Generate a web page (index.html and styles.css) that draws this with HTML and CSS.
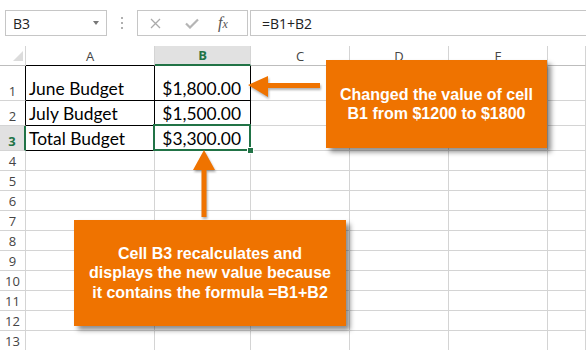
FILE: index.html
```html
<!DOCTYPE html>
<html lang="en">
<head>
    <meta charset="UTF-8">
    <meta name="viewport" content="width=device-width, initial-scale=1.0">
    <title>Cell References</title>
    <link rel="stylesheet" href="styles.css">
</head>
<body>
    <div class="toolbar">
        <div class="namebox"><span>B3</span><span class="caret"></span></div>
        <div class="grip"><i></i><i></i><i></i></div>
        <div class="fxbox">
            <svg class="ico-x" width="11" height="11" viewBox="0 0 11 11"><path d="M1 1L10 10M10 1L1 10" stroke="#aaa" stroke-width="1.3" fill="none"/></svg>
            <svg class="ico-ok" width="14" height="11" viewBox="0 0 14 11"><path d="M1 5.5L5 9.5L13 1.5" stroke="#b5b5b5" stroke-width="2.2" fill="none"/></svg>
            <span class="fx">f<small>x</small></span>
        </div>
        <div class="formula">=B1+B2</div>
    </div>

    <div class="sheet">
        <div class="row head">
            <div class="corner"><span class="tri"></span></div>
            <div class="ch bk">A</div>
            <div class="ch sel">B</div>
            <div class="ch">C</div>
            <div class="ch">D</div>
            <div class="ch">E</div>
            <div class="ch"></div>
        </div>
        <div class="row tall">
            <div class="rh bk">1</div>
            <div class="c bx">June Budget</div>
            <div class="c bx num">$1,800.00</div>
            <div class="c"></div><div class="c"></div><div class="c"></div><div class="c"></div>
        </div>
        <div class="row mid">
            <div class="rh bk">2</div>
            <div class="c bx">July Budget</div>
            <div class="c bx num">$1,500.00</div>
            <div class="c"></div><div class="c"></div><div class="c"></div><div class="c"></div>
        </div>
        <div class="row mid">
            <div class="rh sel">3</div>
            <div class="c bx">Total Budget</div>
            <div class="c num cur">$3,300.00</div>
            <div class="c"></div><div class="c"></div><div class="c"></div><div class="c"></div>
        </div>
        <div class="row"><div class="rh">4</div><div class="c"></div><div class="c"></div><div class="c"></div><div class="c"></div><div class="c"></div><div class="c"></div></div>
        <div class="row"><div class="rh">5</div><div class="c"></div><div class="c"></div><div class="c"></div><div class="c"></div><div class="c"></div><div class="c"></div></div>
        <div class="row"><div class="rh">6</div><div class="c"></div><div class="c"></div><div class="c"></div><div class="c"></div><div class="c"></div><div class="c"></div></div>
        <div class="row"><div class="rh">7</div><div class="c"></div><div class="c"></div><div class="c"></div><div class="c"></div><div class="c"></div><div class="c"></div></div>
        <div class="row"><div class="rh">8</div><div class="c"></div><div class="c"></div><div class="c"></div><div class="c"></div><div class="c"></div><div class="c"></div></div>
        <div class="row"><div class="rh">9</div><div class="c"></div><div class="c"></div><div class="c"></div><div class="c"></div><div class="c"></div><div class="c"></div></div>
        <div class="row"><div class="rh">10</div><div class="c"></div><div class="c"></div><div class="c"></div><div class="c"></div><div class="c"></div><div class="c"></div></div>
        <div class="row"><div class="rh">11</div><div class="c"></div><div class="c"></div><div class="c"></div><div class="c"></div><div class="c"></div><div class="c"></div></div>
        <div class="row"><div class="rh">12</div><div class="c"></div><div class="c"></div><div class="c"></div><div class="c"></div><div class="c"></div><div class="c"></div></div>
        <div class="row"><div class="rh">13</div><div class="c"></div><div class="c"></div><div class="c"></div><div class="c"></div><div class="c"></div><div class="c"></div></div>
    </div>

    <!-- callouts over the sheet -->
    <svg class="arrow a1" width="80" height="28" viewBox="0 0 80 28">
        <path d="M2 13L22 4L22 11L74 11L74 16L22 16L22 25Z" fill="#ef7300"/>
    </svg>
    <div class="callout c1">Changed the value of cell<br>B1 from $1200 to $1800</div>

    <svg class="arrow a2" width="28" height="74" viewBox="0 0 28 74">
        <path d="M14 2L25 22L16.5 22L16.5 69L11.5 69L11.5 22L3 22Z" fill="#ef7300"/>
    </svg>
    <div class="callout c2">Cell B3 recalculates and<br>displays the new value because<br>it contains the formula =B1+B2</div>
</body>
</html>
```

FILE: styles.css
```css
body {
    margin: 0;
    width: 586px;
    height: 350px;
    overflow: hidden;
    position: relative;
    background-color: white;
    font-family: "Open Sans", "Liberation Sans", sans-serif;
}

/* formula bar */

.toolbar {
    display: flex;
    height: 26px;
    margin: 10px 0;
}

.namebox {
    margin-left: 5px;
    width: 102px;
    box-sizing: border-box;
    border: 1px solid #c6c6c6;
    padding: 0 7px;
    display: flex;
    align-items: center;
    justify-content: space-between;
    font-size: 14px;
    color: #222;
}

.caret {
    border-left: 3px solid transparent;
    border-right: 3px solid transparent;
    border-top: 4px solid #777;
}

.grip {
    width: 30px;
    display: flex;
    flex-direction: column;
    align-items: center;
    justify-content: center;
    gap: 3px;
}

.grip i {
    width: 2px;
    height: 2px;
    background-color: #b0b0b0;
}

.fxbox {
    width: 111px;
    box-sizing: border-box;
    border: 1px solid #c6c6c6;
    padding-left: 12px;
    display: flex;
    align-items: center;
}

.ico-ok {
    margin-left: 24px;
}

.fx {
    margin-left: 19px;
    font-family: "Liberation Serif", serif;
    font-style: italic;
    font-size: 16px;
    color: #555;
}

.fx small {
    font-size: 12px;
}

.formula {
    flex: 1;
    margin-left: 2px;
    border: 1px solid #c6c6c6;
    border-right: none;
    padding-left: 11px;
    display: flex;
    align-items: center;
    font-size: 14px;
    color: #222;
}

/* grid */

.row {
    display: grid;
    grid-template-columns: 26px 129px 96px 99px 99px 99px 1fr;
    height: 20px;
}

.row.head {
    height: 20px;
}

.row.tall {
    height: 35px;
}

.row.mid {
    height: 25px;
}

.row > div {
    box-sizing: border-box;
    border-right: 1px solid #d4d4d4;
    border-bottom: 1px solid #d4d4d4;
}

.head > div {
    display: flex;
    align-items: center;
    justify-content: center;
    font-size: 13px;
    line-height: 16px;
    color: #444;
    border-bottom-color: #bdbdbd;
}

.head .corner {
    justify-content: flex-end;
    align-items: flex-end;
    padding: 0 2px 4px 0;
}

.tri {
    width: 0;
    height: 0;
    border-left: 10px solid transparent;
    border-bottom: 10px solid #dcdcdc;
}

.head .ch.bk {
    border-bottom-color: #000;
}

.head .ch.sel {
    background-color: #e1e1e1;
    color: #217346;
    font-weight: bold;
    border-bottom: 2px solid #217346;
}

.rh {
    display: flex;
    align-items: flex-end;
    justify-content: center;
    padding-bottom: 1px;
    font-size: 13px;
    line-height: 16px;
    color: #444;
}

.rh.bk {
    border-right-color: #000;
}

.rh.sel {
    background-color: #e1e1e1;
    color: #217346;
    font-weight: bold;
    border-right: 2px solid #217346;
}

.c {
    display: flex;
    align-items: flex-end;
    padding: 0 0 1px 3px;
    font-family: Lato, "Liberation Sans", sans-serif;
    font-size: 17.4px;
    line-height: 20px;
    color: #000;
    white-space: nowrap;
}

.c.bx {
    border-right-color: #000;
    border-bottom-color: #000;
}

.c.num {
    justify-content: flex-end;
    padding-right: 9px;
}

.c.cur {
    position: relative;
}

.c.cur::after {
    content: "";
    position: absolute;
    top: -2px;
    left: -2px;
    right: -1px;
    bottom: -1px;
    border: 2px solid #217346;
}

.c.cur::before {
    content: "";
    position: absolute;
    right: -4px;
    bottom: -4px;
    width: 5px;
    height: 5px;
    background-color: #217346;
    border: 1px solid white;
    z-index: 2;
}

/* callouts */

.callout {
    position: absolute;
    display: flex;
    align-items: center;
    justify-content: center;
    text-align: center;
    background-color: #ef7300;
    color: white;
    font-family: "Liberation Sans", Arial, sans-serif;
    font-weight: bold;
    font-size: 16px;
    line-height: 19px;
    box-shadow: 4px 4px 5px rgba(0, 0, 0, 0.45);
}

.c1 {
    left: 326px;
    top: 60px;
    width: 221px;
    height: 88px;
}

.c2 {
    left: 74px;
    top: 220px;
    width: 272px;
    height: 106px;
    line-height: 19.5px;
}

.arrow {
    position: absolute;
    filter: drop-shadow(1px 2px 1px rgba(0, 0, 0, 0.3));
}

.a1 {
    left: 246px;
    top: 72px;
}

.a2 {
    left: 190px;
    top: 148px;
}
```
